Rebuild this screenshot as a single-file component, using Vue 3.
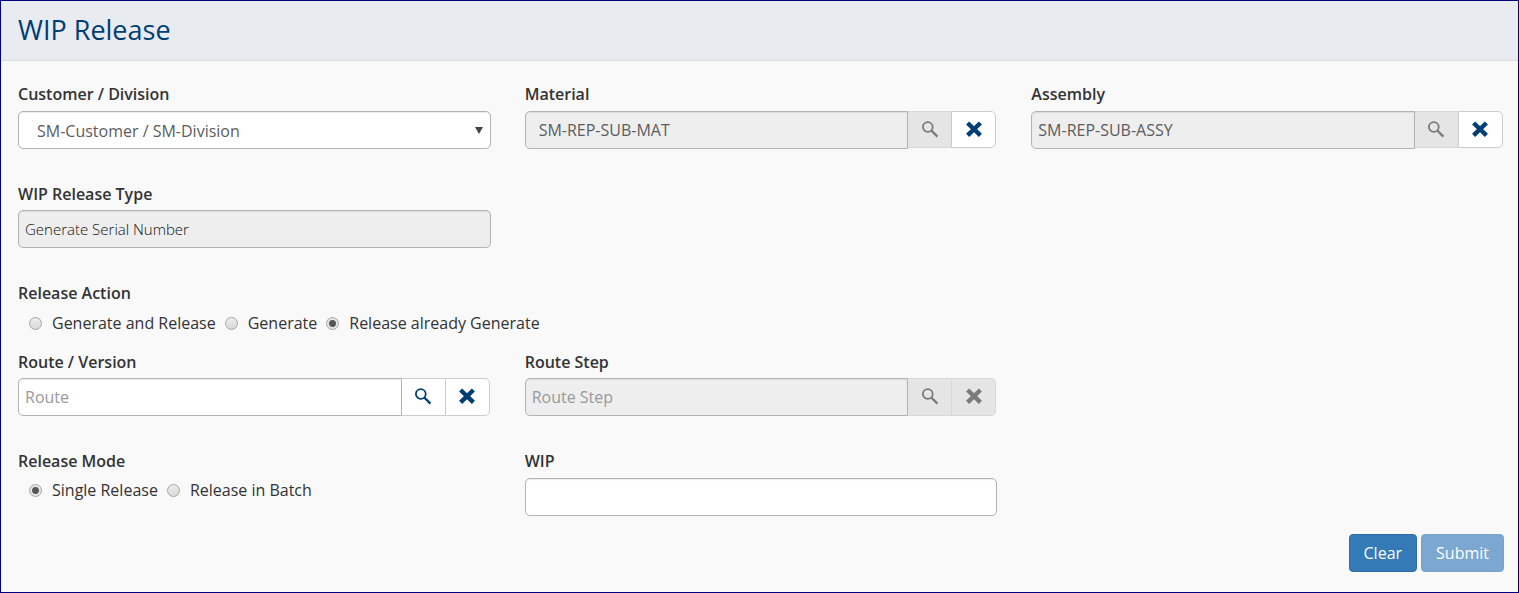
<script setup>
import { ref } from 'vue'

const customer = ref('SM-Customer / SM-Division')
const material = ref('SM-REP-SUB-MAT')
const assembly = ref('SM-REP-SUB-ASSY')
const releaseType = ref('Generate Serial Number')
const route = ref('')
const routeStep = ref('')
const wip = ref('')

const actions = ['Generate and Release', 'Generate', 'Release already Generate']
const action = ref('Release already Generate')
const modes = ['Single Release', 'Release in Batch']
const mode = ref('Single Release')
</script>

<template>
  <main class="panel">
    <svg class="sprite" aria-hidden="true">
      <symbol id="icon-search" viewBox="0 0 18 18">
        <circle cx="6.8" cy="6" r="4.9" fill="none" stroke="currentColor" stroke-width="1.8" />
        <path d="M10.3 9.5L16.4 15.6" fill="none" stroke="currentColor" stroke-width="2.3" />
      </symbol>
      <symbol id="icon-clear" viewBox="0 0 18 18">
        <path d="M2.6 2L15.4 14.4M15.4 2L2.6 14.4" fill="none" stroke="currentColor" stroke-width="4.4" />
      </symbol>
    </svg>

    <header class="header">
      <h1>WIP Release</h1>
    </header>

    <form class="form" @submit.prevent>
      <div class="row first">
        <div class="field">
          <label for="customer">Customer / Division</label>
          <div class="select">
            <select id="customer" v-model="customer">
              <option>SM-Customer / SM-Division</option>
            </select>
            <span class="caret" aria-hidden="true"></span>
          </div>
        </div>
        <div class="field">
          <label for="material">Material</label>
          <div class="group">
            <input id="material" v-model="material" class="control inset" type="text" disabled />
            <button class="addon" type="button" aria-label="Search material" disabled><svg><use href="#icon-search" /></svg></button>
            <button class="addon" type="button" aria-label="Clear material"><svg><use href="#icon-clear" /></svg></button>
          </div>
        </div>
        <div class="field">
          <label for="assembly">Assembly</label>
          <div class="group">
            <input id="assembly" v-model="assembly" class="control" type="text" disabled />
            <button class="addon" type="button" aria-label="Search assembly" disabled><svg><use href="#icon-search" /></svg></button>
            <button class="addon" type="button" aria-label="Clear assembly"><svg><use href="#icon-clear" /></svg></button>
          </div>
        </div>
      </div>

      <div class="row tight">
        <div class="field">
          <label for="type">WIP Release Type</label>
          <input id="type" v-model="releaseType" class="control small" type="text" readonly />
        </div>
      </div>

      <fieldset class="choices">
        <legend>Release Action</legend>
        <div class="options">
          <label v-for="a in actions" :key="a"><input v-model="action" type="radio" name="action" :value="a" />{{ a }}</label>
        </div>
      </fieldset>

      <div class="row tight">
        <div class="field">
          <label for="route">Route / Version</label>
          <div class="group">
            <input id="route" v-model="route" class="control" type="text" placeholder="Route" />
            <button class="addon" type="button" aria-label="Search route"><svg><use href="#icon-search" /></svg></button>
            <button class="addon" type="button" aria-label="Clear route"><svg><use href="#icon-clear" /></svg></button>
          </div>
        </div>
        <div class="field">
          <label for="step">Route Step</label>
          <div class="group">
            <input id="step" v-model="routeStep" class="control" type="text" placeholder="Route Step" disabled />
            <button class="addon" type="button" aria-label="Search route step" disabled><svg><use href="#icon-search" /></svg></button>
            <button class="addon" type="button" aria-label="Clear route step" disabled><svg><use href="#icon-clear" /></svg></button>
          </div>
        </div>
      </div>

      <div class="row last">
        <fieldset class="choices">
          <legend>Release Mode</legend>
          <div class="options">
            <label v-for="m in modes" :key="m"><input v-model="mode" type="radio" name="mode" :value="m" />{{ m }}</label>
          </div>
        </fieldset>
        <div class="field">
          <label for="wip">WIP</label>
          <input id="wip" v-model="wip" class="control" type="text" />
        </div>
      </div>

      <footer class="footer">
        <button class="btn" type="button">Clear</button>
        <button class="btn" type="submit" disabled>Submit</button>
      </footer>
    </form>
  </main>
</template>

<style>
body {
  background: #f9f9f9;
}
</style>

<style scoped>
.panel,
.panel * {
  box-sizing: border-box;
}
.panel {
  min-height: 100vh;
  border: 1px solid #000080;
  background: #f9f9f9;
  color: #333;
  font: 400 16px/22px "Open Sans", sans-serif;
}
.sprite {
  position: absolute;
  width: 0;
  height: 0;
}
.header {
  padding: 9px 17px 11px;
  background: #e8ecf1;
  border-bottom: 1px solid #d5dce4;
}
h1 {
  margin: 0;
  color: #003e74;
  font-size: 27px;
  font-weight: 400;
  line-height: 39px;
}
.form {
  padding: 22px 14px 20px 17px;
}
.row {
  display: grid;
  grid-template-columns: repeat(3, minmax(0, 1fr));
  column-gap: 34px;
  margin-bottom: 34px;
}
.row.last {
  margin-bottom: 18px;
}
.field {
  display: flex;
  flex-direction: column;
  gap: 6px;
}
.tight .field {
  gap: 5px;
}
.field > label,
legend {
  padding: 0;
  font-weight: 600;
}
input,
select,
button {
  margin: 0;
  font: inherit;
}
.control,
select {
  width: 100%;
  height: 38px;
  min-width: 0;
  padding: 0 6px;
  border: 1px solid #b3b3b3;
  border-radius: 5px;
  background: #fff;
  box-shadow: inset 0 1px 1px rgba(0, 0, 0, 0.08);
  color: #5c5c5c;
  opacity: 1;
}
.control.inset {
  padding-left: 13px;
}
.control.small {
  font-size: 15px;
  font-weight: 300;
  color: #111;
}
.control:disabled,
.control:read-only {
  background: #eee;
}
.control::placeholder {
  color: #999;
  opacity: 1;
}
.select {
  position: relative;
}
select {
  display: block;
  appearance: none;
  padding: 2px 18px 0;
}
.caret {
  position: absolute;
  top: 16px;
  right: 8px;
  border: solid transparent;
  border-width: 7px 4px 0;
  border-top-color: #444;
  pointer-events: none;
}
.group {
  display: flex;
  padding-right: 1px;
}
.group .control {
  flex: 1;
  border-radius: 5px 0 0 5px;
}
.addon {
  display: flex;
  align-items: center;
  justify-content: center;
  flex: none;
  width: 43px;
  height: 37px;
  padding: 0;
  border: 1px solid #ccc;
  border-left: 0;
  border-right: 0;
  background: #fff;
  color: #003e74;
}
.tight .addon {
  height: 38px;
}
.addon:last-child {
  width: 45px;
  border-left: 1px solid #ccc;
  border-right: 1px solid #ccc;
  border-radius: 0 5px 5px 0;
}
.addon svg {
  width: 18px;
  height: 18px;
}
.addon:disabled {
  border-color: #d8d8d8;
  background: #e5e5e5;
  color: #7a7a7a;
}
.choices {
  min-width: 0;
  margin: 0;
  padding: 0;
  border: 0;
}
.options {
  display: flex;
  gap: 9px;
  padding: 8px 0 17px 11px;
}
.options label {
  display: flex;
  align-items: center;
  gap: 10px;
}
.options input {
  appearance: none;
  width: 13px;
  height: 13px;
  border: 1px solid #a6a6a6;
  border-radius: 50%;
  background: linear-gradient(#ececec, #d9d9d9);
}
.options input:checked {
  background: radial-gradient(circle, #555 3px, #e4e4e4 4px);
}
.last .options {
  padding-top: 7px;
  padding-bottom: 0;
}
.footer {
  display: flex;
  justify-content: flex-end;
  gap: 4px;
}
.btn {
  height: 38px;
  padding: 0 14px;
  border: 1px solid #2e6da4;
  border-radius: 4px;
  background: #337ab7;
  color: #fff;
}
.btn:disabled {
  border-color: #79a2c7;
  background: #7ba7d0;
}
</style>
